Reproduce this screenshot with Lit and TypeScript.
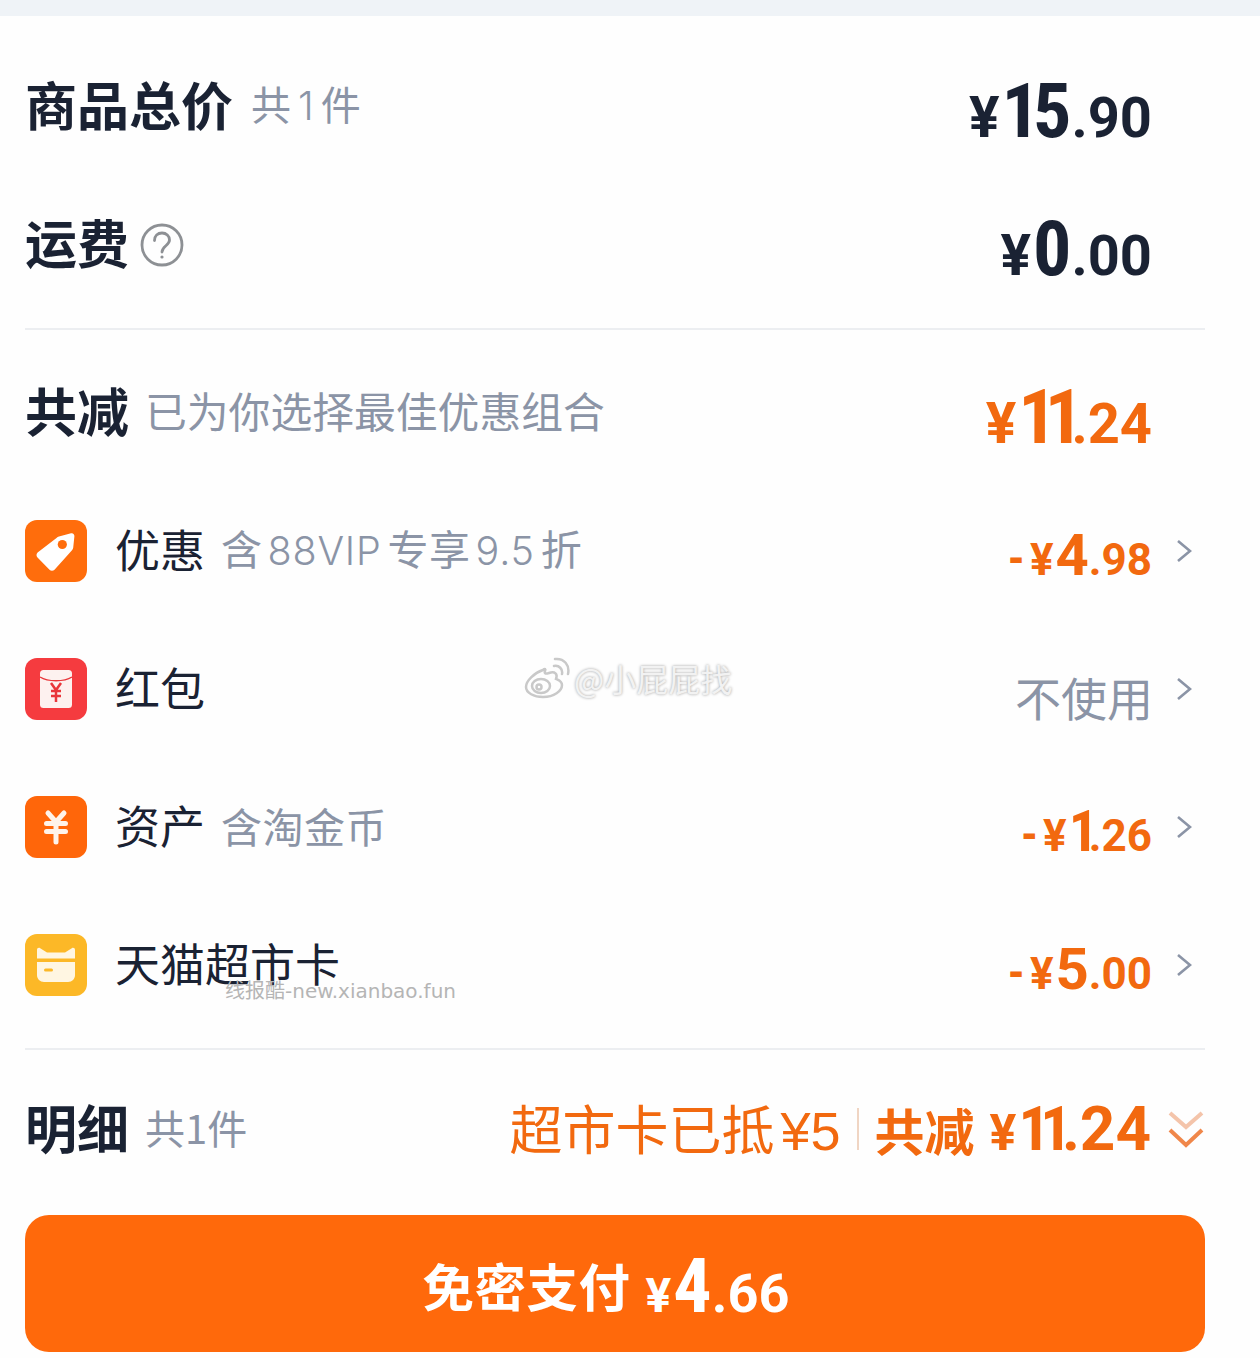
import { LitElement, html, css, svg } from 'lit';
import { customElement } from 'lit/decorators.js';

const chevron = html`<svg class="chev" viewBox="0 0 16 24"><path d="M2 2l12 10L2 22" /></svg>`;

const tagIcon = svg`<rect width="62" height="62" rx="12" fill="#ff6d0c"/>
  <path d="M34 16.5l12-3.2c2-.5 3.6 1 3.4 3l-1.2 11.5c-.1 1-.5 1.8-1.2 2.5L29.5 49.7c-1.4 1.5-3.6 1.5-5 .1L12.5 37.6c-1.4-1.4-1.3-3.6.1-5L31.5 18c.7-.7 1.5-1.2 2.5-1.5z" fill="#fff"/>
  <circle cx="37.300" cy="24.500" r="4.600" fill="#ff6d0c"/>`;

const redIcon = svg`<rect width="62" height="62" rx="12" fill="#f53b3f"/>
  <rect x="15" y="12" width="32" height="38" rx="3.500" fill="#fdf1ef"/>
  <path d="M15 19c8 5 24 5 32 0" fill="none" stroke="#e9363a" stroke-width="1.300"/>
  <path d="M26 25l5 7 5-7M26 33h10M26 38h10M31 32v12" fill="none" stroke="#e9363a" stroke-width="2.500"/>`;

const assetIcon = svg`<rect width="62" height="62" rx="12" fill="#ff660a"/>
  <path d="M23 17l8 9 8-9M21.500 27.500h19M21.500 35.500h19M31 26v20" fill="none" stroke="#fff3ea" stroke-width="5" stroke-linecap="round" stroke-linejoin="round"/>`;

const cardIcon = svg`<rect width="62" height="62" rx="12" fill="#fcb827"/>
  <path d="M12 24.500v-8.500c0-1.800 1.600-2.800 3.200-1.800L22 18.500h18l6.800-4.300c1.600-1 3.200 0 3.200 1.800v8.500z" fill="#fff6e2"/>
  <path d="M12 28h38v13c0 4-3 7-7 7H19c-4 0-7-3-7-7z" fill="#fff6e2"/>
  <rect x="19" y="34.500" width="9" height="3" rx="1.500" fill="#fcb827"/>`;

interface Discount {
  icon: unknown;
  name: string;
  note?: unknown;
  whole?: string;
  cents?: string;
  plain?: string;
}

const discounts: Discount[] = [
  {
    icon: tagIcon,
    name: '优惠',
    note: html`含<span class="latin">88VIP</span>专享<span class="latin">9.5</span>折`,
    whole: '4',
    cents: '.98',
  },
  { icon: redIcon, name: '红包', plain: '不使用' },
  { icon: assetIcon, name: '资产', note: '含淘金币', whole: '1', cents: '.26' },
  { icon: cardIcon, name: '天猫超市卡', whole: '5', cents: '.00' },
];

@customElement('app-root')
export class AppRoot extends LitElement {
  static styles = css`
    :host {
      display: block;
      position: relative;
      width: 1260px;
      height: 1358px;
      overflow: hidden;
      background: #fefefe;
      color: #1a2233;
      font-family: 'Noto Sans CJK SC', 'Noto Sans', sans-serif;
    }

    .strip {
      height: 16px;
      background: #eff3f7;
    }

    .panel {
      padding: 22px 108px 0 25px;
    }

    .row {
      display: flex;
      align-items: center;
      justify-content: space-between;
      height: 138px;
      white-space: nowrap;
    }

    .left {
      display: flex;
      align-items: center;
      margin-bottom: 6px;
    }

    .title {
      font-size: 52px;
      line-height: 60px;
      font-weight: 700;
    }

    .hint {
      margin-left: 16px;
      font-size: 41.800px;
      line-height: 60px;
      color: #8b94a6;
    }

    .count {
      margin-left: 18px;
      font-size: 40px;
      line-height: 60px;
      color: #8b94a6;
    }

    .count .latin {
      margin: 0 7px;
      font-family: Inter, sans-serif;
      font-weight: 300;
    }

    .help {
      width: 44px;
      height: 44px;
      margin: 6px 0 0 11px;
    }

    .rule {
      height: 2px;
      margin: 14px -53px 14px 0;
      background: #eceef1;
    }

    .price {
      font-family: Roboto, 'Liberation Sans', sans-serif;
      font-stretch: 75%;
      font-weight: 700;
      line-height: 60px;
      display: flex;
      align-items: baseline;
      margin-top: 14px;
    }

    .price .yen {
      font-size: 57px;
      font-stretch: 90%;
      margin-right: 2px;
    }

    .price .whole {
      font-size: 76px;
      font-stretch: 78%;
    }

    .price .one {
      letter-spacing: -0.09em;
    }

    .price .one.pair {
      letter-spacing: -0.155em;
    }

    .price .cents {
      font-size: 56px;
      font-stretch: 90%;
    }

    .orange {
      color: #f2690f;
    }

    .discount .left {
      margin-bottom: 0;
    }

    .discount .badge {
      width: 62px;
      height: 62px;
      margin-right: 28px;
      flex: none;
    }

    .discount .name {
      font-size: 45px;
      line-height: 60px;
      margin-bottom: 4px;
    }

    .discount .note {
      margin: 0 0 4px 16px;
      font-size: 41px;
      line-height: 60px;
      letter-spacing: 0.500px;
      color: #8b94a6;
    }

    .note .latin {
      margin: 0 6px 0 5px;
      font-family: Inter, sans-serif;
      font-size: 39.500px;
      font-weight: 300;
      letter-spacing: 0.800px;
    }

    .tail {
      display: flex;
      align-items: center;
      margin-right: -40px;
    }

    .price.small {
      margin-top: 12px;
    }

    .price.small .sign {
      font-size: 48px;
      margin-right: 5px;
    }

    .price.small .yen {
      font-size: 44px;
    }

    .price.small .whole {
      font-size: 58px;
      font-stretch: 88%;
    }

    .price.small .one {
      font-stretch: 75%;
      letter-spacing: -0.16em;
    }

    .price.small .cents {
      font-size: 44px;
    }

    .plain {
      font-size: 46px;
      line-height: 60px;
      color: #8b94a6;
      margin: 14px -1px 0 0;
    }

    .chev {
      width: 16px;
      height: 24px;
      margin-left: 24px;
      flex: none;
      fill: none;
      stroke: #8b94a6;
      stroke-width: 2.600;
    }

    .detail {
      height: 130px;
    }

    .detail .left {
      margin-bottom: 4px;
    }

    .detail .hint {
      font-size: 40px;
    }

    .summary {
      display: flex;
      align-items: center;
      margin-right: -53px;
      color: #f2690f;
    }

    .used {
      font-size: 53px;
      line-height: 60px;
    }

    .used .num {
      font-family: 'Liberation Sans', sans-serif;
      font-size: 54px;
      margin-left: 6px;
    }

    .sep {
      width: 2px;
      height: 42px;
      margin: 0 16px;
      background: #f0d5c3;
    }

    .total {
      font-size: 50px;
      line-height: 60px;
      font-weight: 700;
      margin-right: 15px;
    }

    .summary .price {
      margin-top: 4px;
    }

    .summary .price .yen {
      font-size: 50px;
    }

    .summary .price .whole {
      font-size: 62px;
    }

    .summary .price .cents {
      font-size: 62px;
    }

    .more {
      width: 38px;
      height: 40px;
      margin-left: 16px;
      flex: none;
      fill: none;
      stroke-width: 4;
    }

    .pay {
      display: flex;
      align-items: center;
      justify-content: center;
      height: 137px;
      margin: 21px -53px 0 0;
      padding-right: 18px;
      border-radius: 24px;
      background: #ff690b;
      color: #fff;
    }

    .pay .label {
      margin: 2px 15px 0 0;
      font-size: 51.500px;
      line-height: 60px;
      font-weight: 700;
      letter-spacing: 0.500px;
    }

    .pay .price .yen {
      font-size: 48px;
    }

    .pay .price .whole {
      font-size: 76px;
      font-stretch: 80%;
    }

    .pay .price .cents {
      font-size: 54px;
    }

    .stamp {
      position: absolute;
      left: 524px;
      top: 656px;
      display: flex;
      align-items: center;
      gap: 4px;
      color: #f2f2f2;
      font-size: 32px;
      line-height: 44px;
      text-shadow: 0 0 3px #9a9a9a;
    }

    .stamp svg {
      width: 46px;
      height: 42px;
    }

    .site {
      position: absolute;
      left: 225px;
      top: 978px;
      font-size: 20px;
      line-height: 26px;
      color: #b5b5b5;
      font-family: 'DejaVu Sans', 'Noto Sans CJK SC', sans-serif;
    }
  `;

  private price(whole: string, cents: string) {
    // the reference's "1" is far narrower than the other digits, most of all in "11"
    const digits = [...whole].map((c) =>
      c === '1' ? html`<span class="one ${whole === '11' ? 'pair' : ''}">1</span>` : c,
    );
    return html`<span class="yen">¥</span><span class="whole">${digits}</span><span class="cents">${cents}</span>`;
  }

  private discountRow(d: Discount) {
    return html`
      <div class="row discount">
        <div class="left">
          <svg class="badge" viewBox="0 0 62 62">${d.icon}</svg>
          <span class="name">${d.name}</span>
          ${d.note ? html`<span class="note">${d.note}</span>` : ''}
        </div>
        <div class="tail">
          ${d.plain
            ? html`<span class="plain">${d.plain}</span>`
            : html`<div class="price small orange">
                <span class="sign">-</span>${this.price(d.whole!, d.cents!)}
              </div>`}
          ${chevron}
        </div>
      </div>
    `;
  }

  render() {
    return html`
      <div class="strip"></div>
      <div class="panel">
        <div class="row">
          <div class="left">
            <span class="title">商品总价</span>
            <span class="count">共<span class="latin">1</span>件</span>
          </div>
          <div class="price">${this.price('15', '.90')}</div>
        </div>
        <div class="row">
          <div class="left">
            <span class="title">运费</span>
            <svg class="help" viewBox="0 0 44 44" fill="none" stroke="#8d9094" stroke-width="2.800">
              <circle cx="22" cy="22" r="20" />
              <path d="M14.500 17.500c0-4.500 3.200-7.500 7.500-7.500s7.500 3 7.500 7c0 5.500-7.500 6-7.500 12" stroke-linecap="round" />
              <circle cx="22" cy="34" r="1.600" fill="#8d9094" stroke="none" />
            </svg>
          </div>
          <div class="price">${this.price('0', '.00')}</div>
        </div>
        <div class="rule"></div>
        <div class="row">
          <div class="left"><span class="title">共减</span><span class="hint">已为你选择最佳优惠组合</span></div>
          <div class="price orange">${this.price('11', '.24')}</div>
        </div>
        ${discounts.map((d) => this.discountRow(d))}
        <div class="rule"></div>
        <div class="row detail">
          <div class="left"><span class="title">明细</span><span class="hint">共1件</span></div>
          <div class="summary">
            <span class="used">超市卡已抵<span class="num">¥5</span></span>
            <span class="sep"></span>
            <span class="total">共减</span>
            <div class="price">${this.price('11', '.24')}</div>
            <svg class="more" viewBox="0 0 38 40">
              <path d="M3 4l16 14L35 4" stroke="#f4c4aa" />
              <path d="M3 21l16 15 16-15" stroke="#f0874a" />
            </svg>
          </div>
        </div>
        <div class="pay">
          <span class="label">免密支付</span>
          <div class="price">${this.price('4', '.66')}</div>
        </div>
      </div>
      <div class="stamp">
        <svg viewBox="0 0 46 42" fill="none" stroke="#c9c9c9" stroke-width="2.500">
          <path d="M19 13C10 16 2 24 2 30c0 6 8 10 17 10 11 0 19-6 19-12 0-4-4-5-6-6 2-5-1-8-7-6-3 1-5 1-4-2 1-2 0-3-2-1z" />
          <ellipse cx="17" cy="29" rx="9" ry="7" />
          <circle cx="15" cy="30" r="2.500" />
          <path d="M30 9c5-1 9 3 8 8M31 2c9-1 15 6 13 15" stroke-linecap="round" />
        </svg>
        <span>@小屁屁找</span>
      </div>
      <div class="site">线报酷-new.xianbao.fun</div>
    `;
  }
}
